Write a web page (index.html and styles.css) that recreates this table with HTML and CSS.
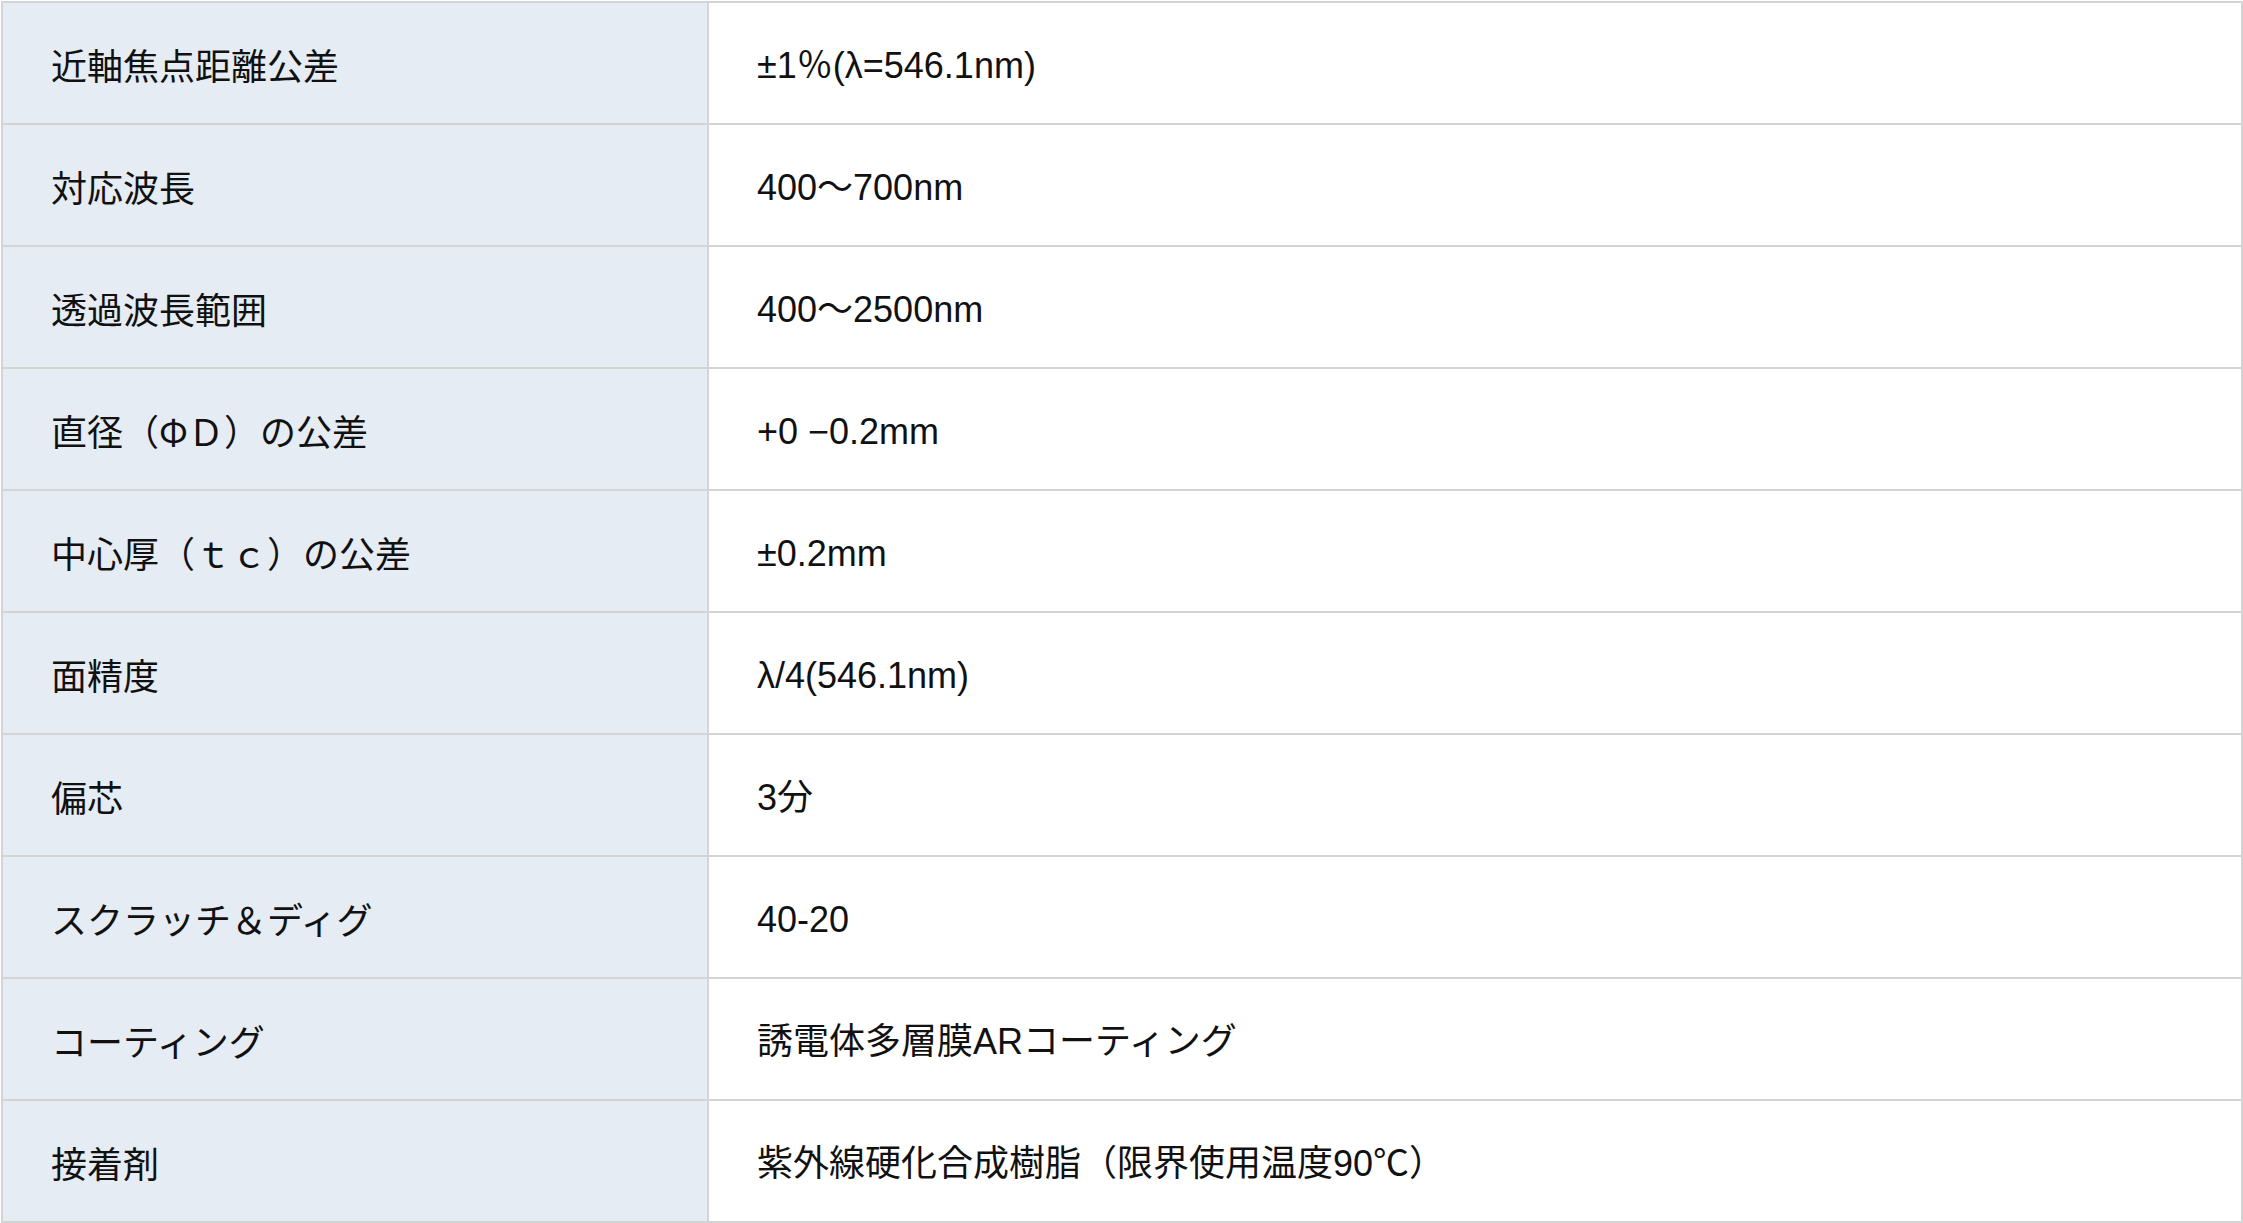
FILE: index.html
```html
<!DOCTYPE html>
<html lang="ja">
<head>
<meta charset="utf-8">
<title>仕様</title>
<link rel="stylesheet" href="styles.css">
</head>
<body>
<div class="page">
  <div class="spec">
    <div class="label">近軸焦点距離公差</div><div class="value">±1％(λ=546.1nm)</div>
    <div class="label">対応波長</div><div class="value">400～700nm</div>
    <div class="label">透過波長範囲</div><div class="value">400～2500nm</div>
    <div class="label">直径（ΦＤ）の公差</div><div class="value">+0 −0.2mm</div>
    <div class="label">中心厚（ｔｃ）の公差</div><div class="value">±0.2mm</div>
    <div class="label">面精度</div><div class="value">λ/4(546.1nm)</div>
    <div class="label">偏芯</div><div class="value">3分</div>
    <div class="label">スクラッチ＆ディグ</div><div class="value">40-20</div>
    <div class="label">コーティング</div><div class="value">誘電体多層膜ARコーティング</div>
    <div class="label">接着剤</div><div class="value">紫外線硬化合成樹脂（限界使用温度90℃）</div>
  </div>
</div>
</body>
</html>
```

FILE: styles.css
```css
html, body {
  margin: 0;
  padding: 0;
  background: #ffffff;
}

.page {
  padding: 1px 0 0 1px;
}

.spec {
  display: grid;
  grid-template-columns: 706px 1fr;
  grid-auto-rows: 122px;
  width: 2242px;
  box-sizing: border-box;
  border-top: 2px solid #d4d4d4;
  border-left: 2px solid #d4d4d4;
  font-family: "Noto Sans CJK JP", "Noto Sans", sans-serif;
  font-size: 36px;
  line-height: 52px;
  color: #111111;
}

.label,
.value {
  display: flex;
  align-items: center;
  box-sizing: border-box;
  padding: 1px 48px 0 48px;
  border-right: 2px solid #d4d4d4;
  border-bottom: 2px solid #d4d4d4;
  white-space: nowrap;
}

.label {
  background: #e5ecf3;
}

.value {
  background: #ffffff;
  padding-top: 5px;
  font-family: "Liberation Sans", "Noto Sans CJK JP", sans-serif;
}
```
